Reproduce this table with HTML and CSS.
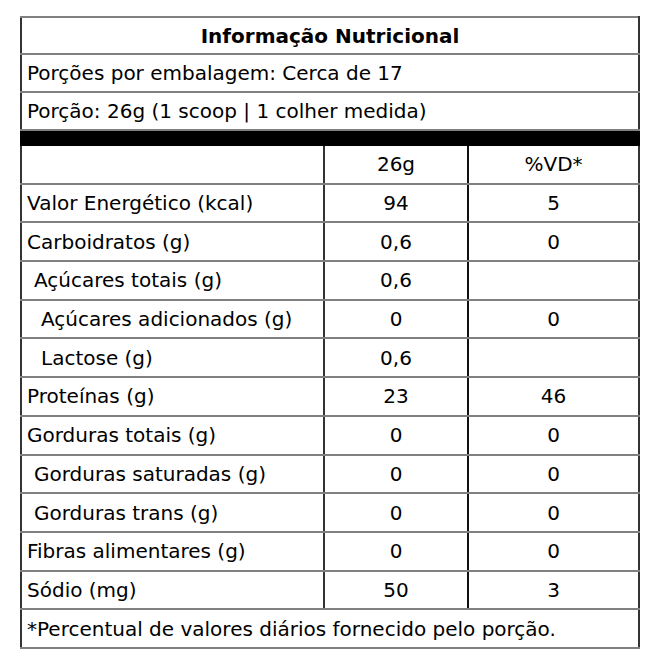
FILE: index.html
```html
<!DOCTYPE html>
<html lang="pt">
<head>
<meta charset="utf-8">
<title>Informação Nutricional</title>
<link rel="stylesheet" href="styles.css">
</head>
<body>
<table class="nutri">
  <colgroup>
    <col class="c-name">
    <col class="c-num">
    <col class="c-vd">
  </colgroup>
  <tr class="head"><td colspan="3" class="title">Informação Nutricional</td></tr>
  <tr class="head"><td colspan="3">Porções por embalagem: Cerca de 17</td></tr>
  <tr class="head"><td colspan="3">Porção: 26g (1 scoop | 1 colher medida)</td></tr>
  <tr class="bar"><td colspan="3"></td></tr>
  <tr><td class="name"></td><td class="num">26g</td><td class="vd">%VD*</td></tr>
  <tr><td class="name">Valor Energético (kcal)</td><td class="num">94</td><td class="vd">5</td></tr>
  <tr><td class="name">Carboidratos (g)</td><td class="num">0,6</td><td class="vd">0</td></tr>
  <tr><td class="name ind1">Açúcares totais (g)</td><td class="num">0,6</td><td class="vd"></td></tr>
  <tr><td class="name ind2">Açúcares adicionados (g)</td><td class="num">0</td><td class="vd">0</td></tr>
  <tr><td class="name ind2">Lactose (g)</td><td class="num">0,6</td><td class="vd"></td></tr>
  <tr><td class="name">Proteínas (g)</td><td class="num">23</td><td class="vd">46</td></tr>
  <tr><td class="name">Gorduras totais (g)</td><td class="num">0</td><td class="vd">0</td></tr>
  <tr><td class="name ind1">Gorduras saturadas (g)</td><td class="num">0</td><td class="vd">0</td></tr>
  <tr><td class="name ind1">Gorduras trans (g)</td><td class="num">0</td><td class="vd">0</td></tr>
  <tr><td class="name">Fibras alimentares (g)</td><td class="num">0</td><td class="vd">0</td></tr>
  <tr><td class="name">Sódio (mg)</td><td class="num">50</td><td class="vd">3</td></tr>
  <tr><td colspan="3">*Percentual de valores diários fornecido pelo porção.</td></tr>
</table>
</body>
</html>
```
FILE: styles.css
```css
html, body {
  margin: 0;
  background: #fff;
}
body {
  padding: 16px 0 0 20px;
  font-family: "DejaVu Sans", sans-serif;
  font-size: 20px;
  color: #000;
}
.nutri {
  border-collapse: collapse;
  width: 618px;
  table-layout: fixed;
}
.c-name { width: 303px; }
.c-num { width: 144px; }
.c-vd { width: 171px; }
.nutri td {
  height: 36.7px;
  padding: 0 0 0 5px;
  border-top: 2px solid #808080;
  border-bottom: 2px solid #808080;
  border-left: 2px solid #333;
  border-right: 2px solid #333;
  vertical-align: middle;
  white-space: nowrap;
  line-height: 24px;
}
.nutri .head td {
  height: 36px;
}
.nutri .head td.title {
  height: 35px;
  text-align: center;
  font-weight: bold;
  padding: 0;
}
.nutri .bar td {
  height: 13px;
  background: #000;
  border-color: #000;
  padding: 0;
}
.nutri td.num {
  text-align: center;
  padding: 0;
  border-left: 2px solid #111;
  border-right: 2px solid #111;
}
.nutri td.vd {
  text-align: center;
  padding: 0;
}
.nutri td.ind1 {
  padding-left: 12px;
}
.nutri td.ind2 {
  padding-left: 19px;
}
```
